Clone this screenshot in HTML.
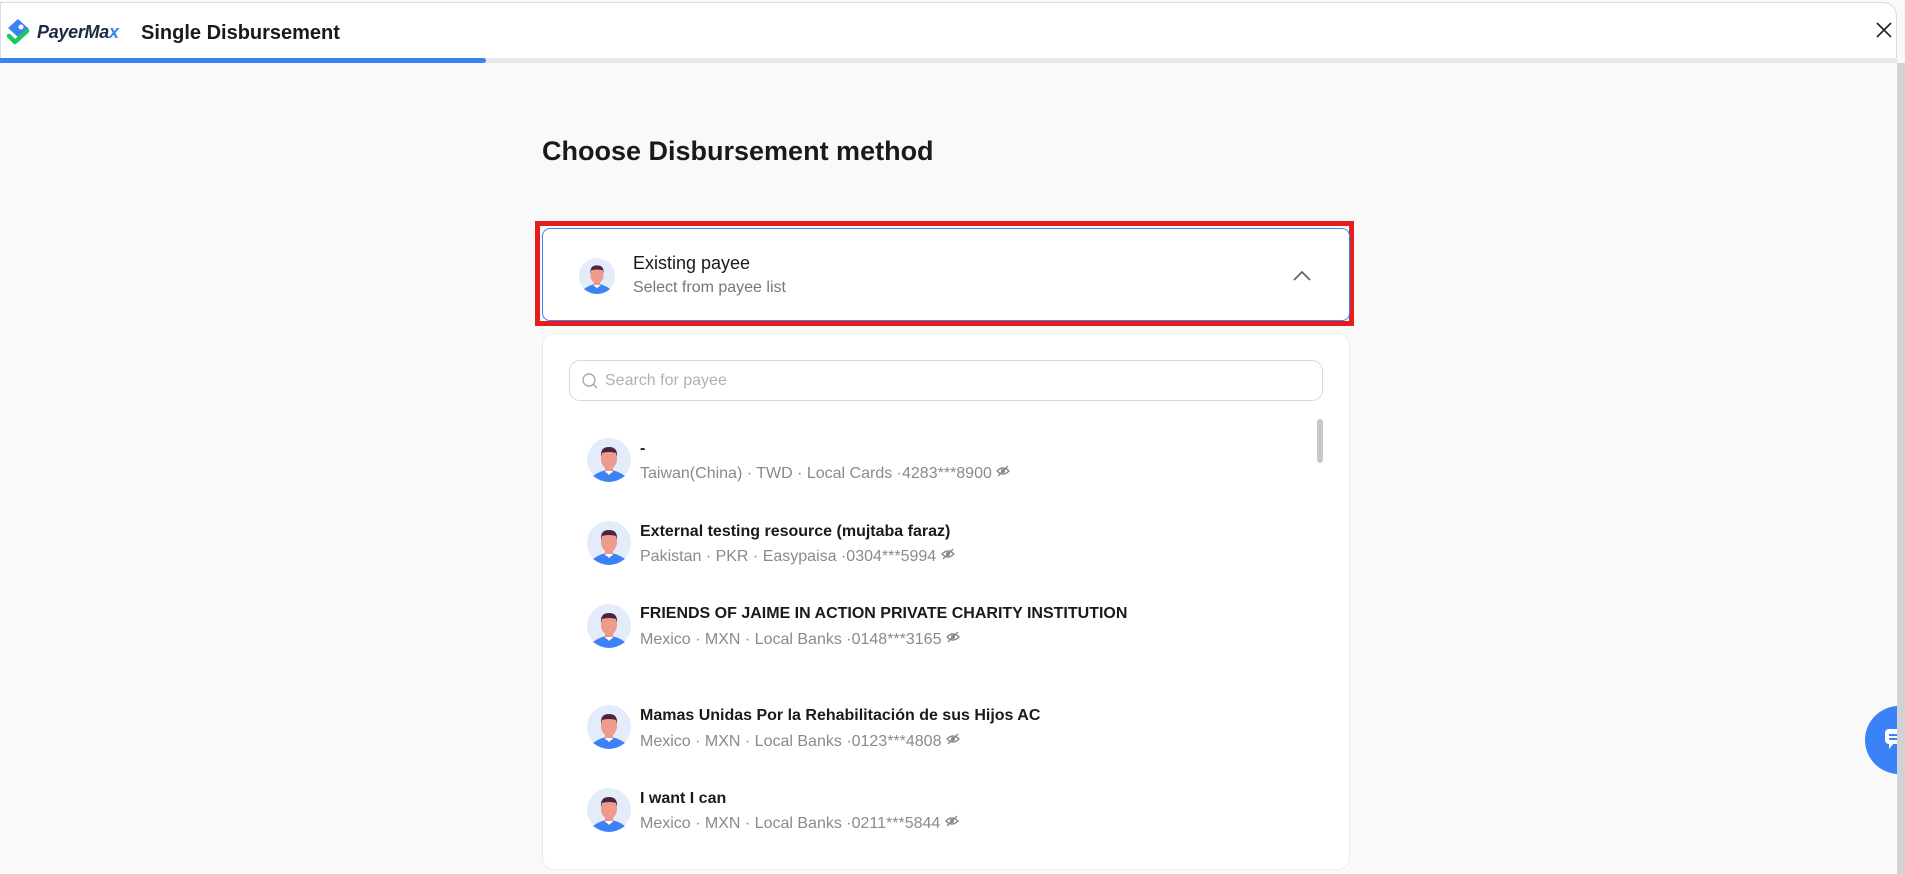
<!DOCTYPE html>
<html><head><meta charset="utf-8">
<style>
*{box-sizing:border-box;margin:0;padding:0}
body{width:1905px;height:874px;overflow:hidden;background:#f9f9f9;font-family:"Liberation Sans",Arial,sans-serif;position:relative}
.abs{position:absolute}
.hdr{left:0;top:2px;width:1897px;height:58px;background:#fff;border:1px solid #dcdcdc;border-bottom:none;border-radius:0 14px 0 0}
.track{left:0;top:58px;width:1897px;height:5px;background:#e8e8e8}
.bar{left:0;top:58px;width:486px;height:5px;background:#3b82f6;border-radius:0 3px 3px 0}
.sb{left:1897px;top:63px;width:8px;height:811px;background:#d2d2d6}
.title{left:141px;top:22px;font-size:20px;font-weight:bold;color:#1a1a1a}
h1{position:absolute;left:542px;top:136px;font-size:27px;font-weight:bold;color:#1a1a1a}
.red{left:535px;top:221px;width:819px;height:105px;border:5px solid #e41e1e}
.sel{left:542px;top:228px;width:808px;height:93px;background:#fff;border:1.5px solid #3b82f6;border-radius:8px}
.card{left:542px;top:333px;width:808px;height:537px;background:#fff;border:1px solid #ececec;border-radius:12px}
.search{left:569px;top:360px;width:754px;height:41px;border:1px solid #d9d9de;border-radius:11px;background:#fff}
.search span{position:absolute;left:35px;top:11px;font-size:16px;color:#b0b0b8}
.thumb{left:1317px;top:419px;width:6px;height:44px;background:#c8c8cc;border-radius:3px}
.name{position:absolute;left:640px;font-size:16px;font-weight:bold;color:#1a1a1a}
.det{position:absolute;left:640px;font-size:16px;color:#8a8a8a}
.av{position:absolute}
</style></head><body>
<div class="abs hdr"></div>
<div class="abs track"></div>
<div class="abs bar"></div>
<div class="abs sb"></div>
<svg class="abs" style="left:5px;top:18px" width="26" height="28" viewBox="0 0 26 28">
<path d="M13 1 L24 11 L14 20 L3 10 Z" fill="#3b82f6"/>
<circle cx="16" cy="9" r="2.5" fill="#fff"/>
<path d="M4 18 L10 24 L22 13" stroke="#22c55e" stroke-width="4.5" fill="none" stroke-linecap="round" stroke-linejoin="round"/>
</svg>
<div class="abs" style="left:37px;top:22px;font-size:18px;font-weight:bold;font-style:italic;color:#1e2a44;letter-spacing:-0.3px">PayerMa<span style="color:#3b82f6">x</span></div>
<div class="abs title">Single Disbursement</div>
<svg class="abs" style="left:1876px;top:22px" width="16" height="16" viewBox="0 0 16 16"><path d="M1 1L15 15M15 1L1 15" stroke="#222" stroke-width="1.6"/></svg>

<h1>Choose Disbursement method</h1>
<div class="abs red"></div>
<div class="abs sel"></div>
<svg class="av" style="left:579px;top:258px" width="36" height="36" viewBox="0 0 44 44"><circle cx="22" cy="22" r="22" fill="#e4ecfb"/><path d="M6 38 Q22 26 38 38 Q30 44 22 44 Q14 44 6 38Z" fill="#3b82f6"/><rect x="18" y="27" width="8" height="8" fill="#e8978a"/><ellipse cx="22" cy="21" rx="8" ry="10" fill="#ee9b8c"/><path d="M14 19 Q13 9 22 9 Q31 9 30 19 L29 15 Q22 13 15 15Z" fill="#4a2540"/><path d="M18 33 L22 37 L26 33" fill="#fff"/></svg>
<div class="abs" style="left:633px;top:253px;font-size:18px;color:#1a1a1a">Existing payee</div>
<div class="abs" style="left:633px;top:279px;font-size:16px;color:#777">Select from payee list</div>
<svg class="abs" style="left:1293px;top:271px" width="18" height="10" viewBox="0 0 18 10"><path d="M1 9L9 1L17 9" stroke="#666" stroke-width="1.8" fill="none"/></svg>

<div class="abs card"></div>
<div class="abs search"><svg style="position:absolute;left:12px;top:12px" width="16" height="17" viewBox="0 0 16 17"><circle cx="7" cy="7" r="6" stroke="#aaa" stroke-width="1.4" fill="none"/><path d="M11.5 11.5L15 15" stroke="#aaa" stroke-width="1.4"/></svg><span>Search for payee</span></div>
<div class="abs thumb"></div>

<svg width="0" height="0" style="position:absolute"><defs><symbol id="a" viewBox="0 0 44 44"><circle cx="22" cy="22" r="22" fill="#e4ecfb"/><path d="M6 38 Q22 26 38 38 Q30 44 22 44 Q14 44 6 38Z" fill="#3b82f6"/><rect x="18" y="27" width="8" height="8" fill="#e8978a"/><ellipse cx="22" cy="21" rx="8" ry="10" fill="#ee9b8c"/><path d="M14 19 Q13 9 22 9 Q31 9 30 19 L29 15 Q22 13 15 15Z" fill="#4a2540"/><path d="M18 33 L22 37 L26 33" fill="#fff"/></symbol>
<symbol id="e" viewBox="0 0 14 14"><path d="M1 7 Q7 1 13 7 Q7 13 1 7Z" stroke="#888" stroke-width="1.3" fill="none"/><circle cx="7" cy="7" r="2" fill="#888"/><path d="M2 12L12 2" stroke="#888" stroke-width="1.3"/></symbol></defs></svg>

<svg class="av" style="left:587px;top:438px" width="44" height="44"><use href="#a"/></svg>
<div class="name" style="top:440px">-</div>
<div class="det" style="top:464px">Taiwan(China) · TWD · Local Cards ·4283***8900 <svg width="14" height="14"><use href="#e"/></svg></div>

<svg class="av" style="left:587px;top:521px" width="44" height="44"><use href="#a"/></svg>
<div class="name" style="top:523px">External testing resource (mujtaba faraz)</div>
<div class="det" style="top:547px">Pakistan · PKR · Easypaisa ·0304***5994 <svg width="14" height="14"><use href="#e"/></svg></div>

<svg class="av" style="left:587px;top:604px" width="44" height="44"><use href="#a"/></svg>
<div class="name" style="top:605px">FRIENDS OF JAIME IN ACTION PRIVATE CHARITY INSTITUTION</div>
<div class="det" style="top:630px">Mexico · MXN · Local Banks ·0148***3165 <svg width="14" height="14"><use href="#e"/></svg></div>

<svg class="av" style="left:587px;top:705px" width="44" height="44"><use href="#a"/></svg>
<div class="name" style="top:707px">Mamas Unidas Por la Rehabilitación de sus Hijos AC</div>
<div class="det" style="top:732px">Mexico · MXN · Local Banks ·0123***4808 <svg width="14" height="14"><use href="#e"/></svg></div>

<svg class="av" style="left:587px;top:788px" width="44" height="44"><use href="#a"/></svg>
<div class="name" style="top:790px">I want I can</div>
<div class="det" style="top:814px">Mexico · MXN · Local Banks ·0211***5844 <svg width="14" height="14"><use href="#e"/></svg></div>

<div class="abs" style="left:1865px;top:706px;width:68px;height:68px;border-radius:50%;background:#3b82f6"></div>
<svg class="abs" style="left:1885px;top:729px" width="20" height="22" viewBox="0 0 20 22"><rect x="0" y="0" width="20" height="15" rx="4" fill="#fff"/><path d="M4 14L4 20L9 14Z" fill="#fff"/><rect x="4" y="5" width="16" height="2" fill="#3b82f6"/><rect x="4" y="9" width="12" height="2" fill="#3b82f6"/></svg>
<div class="abs" style="left:1897px;top:700px;width:8px;height:80px;background:#d2d2d6"></div>
</body></html>
